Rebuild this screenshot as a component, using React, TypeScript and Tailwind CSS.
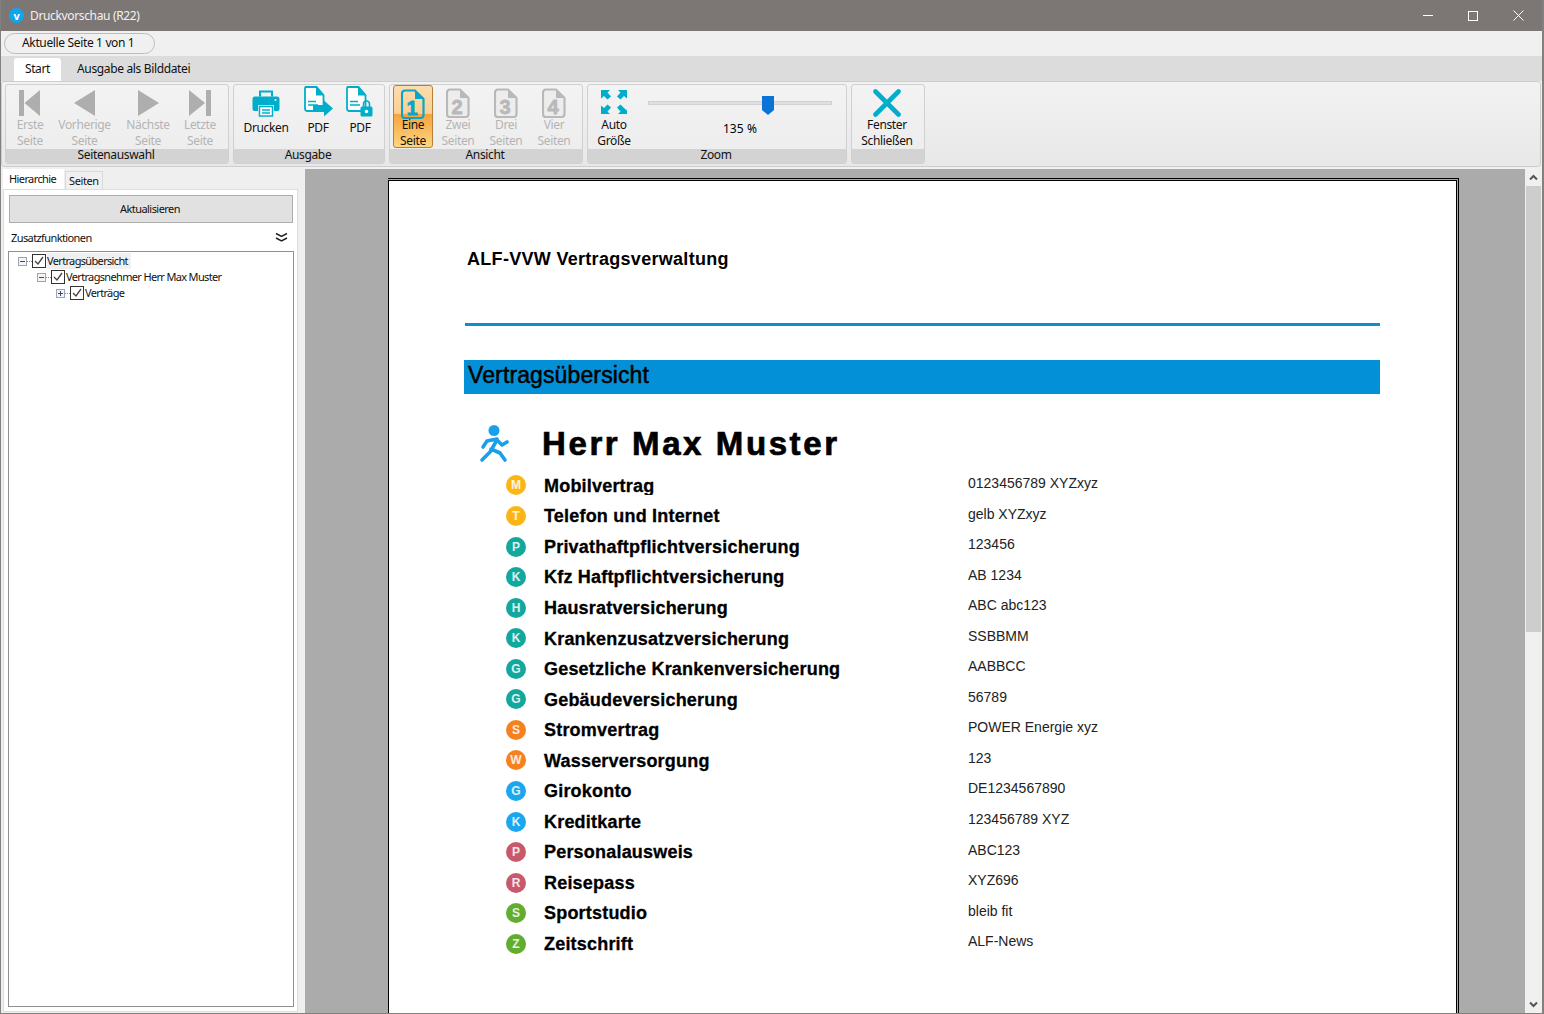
import React from "react";

const ui = "font-['Noto_Sans',sans-serif] text-[12px] leading-[16px] tracking-[-0.35px]";
const doc = "font-['Liberation_Sans',Arial,sans-serif] tracking-normal";

function Nav({ kind }: { kind: "first" | "prev" | "next" | "last" }) {
  return (
    <svg width="30" height="28" viewBox="0 0 30 28" className="block">
      {kind === "first" && <path d="M4 1h5v26H4zM9.500 14 25 1v26z" fill="#aeaeae" />}
      {kind === "prev" && <path d="M4 14 25 1v26z" fill="#aeaeae" />}
      {kind === "next" && <path d="M5 1l21 13L5 27z" fill="#aeaeae" />}
      {kind === "last" && <path d="M4 1l16 13L4 27zM21 1h5v26h-5z" fill="#aeaeae" />}
    </svg>
  );
}

function PageIcon({ n, active }: { n: string; active?: boolean }) {
  const c = active ? "#0aa5c9" : "#b9b9b9";
  return (
    <svg width="24" height="31" viewBox="0 0 24 31" className="block">
      <path d="M4 1.500h10l8.500 8.500v16a3 3 0 0 1-3 3h-15.500a3 3 0 0 1-3-3v-21.500a3 3 0 0 1 3-3z" fill={active ? "none" : "#ededed"} stroke={c} strokeWidth="2.200" />
      <path d="M14 1.500v8.500h8.500z" fill={c} />
      <text x="11" y="26" textAnchor="middle" fontSize="20" fontWeight="700" fontFamily="Liberation Sans" fill={c} stroke={c} strokeWidth="0.800">{n}</text>
    </svg>
  );
}

function Printer() {
  return (
    <svg width="28" height="28" viewBox="0 0 28 28" className="block">
      <path d="M7 1.500h14v6h-2v-4H9v4H7z" fill="#00aecb" />
      <path d="M3 7.500h22a2.500 2.500 0 0 1 2.500 2.500v10a2 2 0 0 1-2 2H22v-6H6v6H2.500a2 2 0 0 1-2-2V10A2.500 2.500 0 0 1 3 7.500z" fill="#00aecb" />
      <path d="M7.500 17.500h13V27h-13z" fill="#fff" stroke="#00aecb" strokeWidth="1.500" />
      <path d="M10 21h8M10 24h8" stroke="#00aecb" strokeWidth="1.300" />
      <circle cx="23.500" cy="11" r="1" fill="#fff" />
    </svg>
  );
}

function PdfDoc({ overlay }: { overlay: "arrow" | "lock" }) {
  return (
    <svg width="32" height="32" viewBox="0 0 32 32" className="block">
      <path d="M3.500 1h11l7 8v16h-16a2.500 2.500 0 0 1-2.500-2.500V3.500A2.500 2.500 0 0 1 3.500 1z" fill="#fff" stroke="#00aecb" strokeWidth="1.800" />
      <path d="M14 1v8.500h7.500z" fill="#00aecb" />
      <path d="M6 15.500h8M6 19h10" stroke="#00aecb" strokeWidth="1.400" />
      {overlay === "arrow" ? (
        <path d="M11 21h11v-4.500l9 8-9 8V27H11z" fill="#00aecb" transform="translate(0 -2)" />
      ) : (
        <g>
          <path d="M19.500 21v-3a3 3 0 0 1 6 0v3" fill="none" stroke="#00aecb" strokeWidth="1.600" />
          <rect x="16.500" y="20.500" width="12" height="10" rx="1.500" fill="#00aecb" />
          <circle cx="22.500" cy="25.500" r="1.700" fill="#fff" />
        </g>
      )}
    </svg>
  );
}

function AutoSize() {
  return (
    <svg width="28" height="26" viewBox="0 0 28 26" className="block">
      <g fill="#00aecb">
        <path d="M1 1h9L7.500 3.500 11 7.500 7.500 10.500 4 7 1 9.500z" />
        <path d="M27 1h-9l2.500 2.500L17 7.500l3.500 3L24 7l3 2.500z" />
        <path d="M1 25h9l-2.500-2.500L11 18.500l-3.500-3L4 19l-3-2.500z" />
        <path d="M27 25h-9l2.500-2.500L17 18.500l3.500-3L24 19l3 2.500z" />
      </g>
    </svg>
  );
}

function Btn({ w, l1, l2, dis, icon, single }: { w: string; l1: string; l2?: string; dis?: boolean; icon: React.ReactNode; single?: boolean }) {
  return (
    <div className={`${w} flex flex-col items-center shrink-0 ${dis ? "text-[#b4b4b4]" : "text-[#111]"}`}>
      <div className={`flex justify-center items-start shrink-0 ${single ? "h-[35px] pt-[1px]" : "h-[32px] pt-[4px]"}`}>{icon}</div>
      <span className="whitespace-nowrap">{l1}</span>
      {l2 && <span className="whitespace-nowrap">{l2}</span>}
    </div>
  );
}

function Group({ w, caption, children }: { w: string; caption: string; children: React.ReactNode }) {
  return (
    <div className={`${w} h-[80px] shrink-0 flex flex-col rounded-[3px] border border-[#d0d0d0] overflow-hidden bg-[linear-gradient(#f3f3f3,#ececec)]`}>
      <div className="h-[64px] flex">{children}</div>
      <div className="h-[14px] flex-1 bg-[#d3d3d3] text-center text-[#111] leading-[12px] pr-[2px]">{caption}</div>
    </div>
  );
}

function Check() {
  return (
    <span className="w-[14px] h-[14px] shrink-0 border border-[#333] bg-white flex items-center justify-center">
      <svg width="12" height="12" viewBox="0 0 12 12"><path d="M2 6l3 3 5-7" fill="none" stroke="#444" strokeWidth="1.300" /></svg>
    </span>
  );
}

function Expander({ open }: { open?: boolean }) {
  return (
    <span className="w-[9px] h-[9px] shrink-0 border border-[#9aa6b8] bg-[#f4f4f4] flex items-center justify-center relative">
      <span className="absolute w-[5px] h-[1px] bg-[#3a4a7a]" />
      {!open && <span className="absolute w-[1px] h-[5px] bg-[#3a4a7a]" />}
    </span>
  );
}

function TreeRow({ pl, open, text, sel }: { pl: string; open?: boolean; text: string; sel?: boolean }) {
  return (
    <div className={`${pl} h-[16px] flex items-center`}>
      <Expander open={open} />
      <span className="w-[5px] border-t border-dotted border-[#888]" />
      <Check />
      <span className={`ml-[1px] pr-[3px] text-[11px] leading-[16px] tracking-[-0.66px] whitespace-nowrap text-[#111] ${sel ? "bg-[#f0f0f0]" : ""}`}>{text}</span>
    </div>
  );
}

const rows: [string, string, string, string][] = [
  ["M", "#fdb515", "Mobilvertrag", "0123456789 XYZxyz"],
  ["T", "#fdb515", "Telefon und Internet", "gelb XYZxyz"],
  ["P", "#12a89d", "Privathaftpflichtversicherung", "123456"],
  ["K", "#12a89d", "Kfz Haftpflichtversicherung", "AB 1234"],
  ["H", "#12a89d", "Hausratversicherung", "ABC abc123"],
  ["K", "#12a89d", "Krankenzusatzversicherung", "SSBBMM"],
  ["G", "#12a89d", "Gesetzliche Krankenversicherung", "AABBCC"],
  ["G", "#12a89d", "Gebäudeversicherung", "56789"],
  ["S", "#f5821f", "Stromvertrag", "POWER Energie xyz"],
  ["W", "#f5821f", "Wasserversorgung", "123"],
  ["G", "#1aa7f0", "Girokonto", "DE1234567890"],
  ["K", "#1aa7f0", "Kreditkarte", "123456789 XYZ"],
  ["P", "#c8596a", "Personalausweis", "ABC123"],
  ["R", "#c8596a", "Reisepass", "XYZ696"],
  ["S", "#62ad2e", "Sportstudio", "bleib fit"],
  ["Z", "#62ad2e", "Zeitschrift", "ALF-News"],
];

export default function App() {
  return (
    <div className={`${ui} w-[1544px] h-[1014px] overflow-hidden flex flex-col bg-[#f0f0f0] border-l border-r-2 border-b border-[#858080]`}>
      {/* title bar */}
      <div className="h-[31px] shrink-0 bg-[#7c7675] flex items-center text-[#f2f2f2]">
        <span className="ml-[8px] w-[15px] h-[15px] rounded-full bg-[#12a5ef] text-white text-[11px] leading-[15px] font-bold text-center">v</span>
        <span className="ml-[6px]">Druckvorschau (R22)</span>
        <div className="ml-auto flex items-center gap-[35px] mr-[18px]">
          <span className="w-[10px] h-[1px] bg-white" />
          <span className="w-[10px] h-[10px] border border-white" />
          <svg width="11" height="11" viewBox="0 0 11 11"><path d="M.5.500l10 10M10.500.500l-10 10" stroke="#fff" strokeWidth="1" /></svg>
        </div>
      </div>
      {/* page indicator */}
      <div className="h-[25px] shrink-0 bg-[#f0f0f0] pl-[3px] pt-[2px]">
        <div className="w-[151px] h-[21px] rounded-full border border-[#bcbcbc] pl-[17px] leading-[18px] text-[#111]">Aktuelle Seite 1 von 1</div>
      </div>
      {/* ribbon tabs */}
      <div className="h-[25px] shrink-0 bg-[#dcdcdc] flex items-end pl-[13px] text-[#111]">
        <div className="w-[47px] h-[23px] bg-white rounded-t-[3px] text-center leading-[22px]">Start</div>
        <div className="ml-[16px] h-[23px] leading-[22px]">Ausgabe als Bilddatei</div>
      </div>
      {/* ribbon */}
      <div className="h-[86px] shrink-0 mr-[1px] rounded-[3px] border border-[#cdcdcd] bg-[linear-gradient(#f2f2f2,#e8e8e8)] flex gap-[4px] pl-[3px] pt-[2px]">
        <Group w="w-[224px]" caption="Seitenauswahl">
          <Btn w="w-[48px]" dis l1="Erste" l2="Seite" icon={<Nav kind="first" />} />
          <Btn w="w-[61px]" dis l1="Vorherige" l2="Seite" icon={<Nav kind="prev" />} />
          <Btn w="w-[66px]" dis l1="Nächste" l2="Seite" icon={<Nav kind="next" />} />
          <Btn w="w-[38px]" dis l1="Letzte" l2="Seite" icon={<Nav kind="last" />} />
        </Group>
        <Group w="w-[152px]" caption="Ausgabe">
          <Btn w="w-[64px]" single l1="Drucken" icon={<div className="pt-[3px]"><Printer /></div>} />
          <Btn w="w-[40px]" single l1="PDF" icon={<PdfDoc overlay="arrow" />} />
          <Btn w="w-[44px]" single l1="PDF" icon={<PdfDoc overlay="lock" />} />
        </Group>
        <Group w="w-[194px]" caption="Ansicht">
          <div className="w-[40px] h-[63px] ml-[3px] shrink-0 rounded-[3px] border border-[#b4803c] bg-[linear-gradient(#fddcae_0%,#fbcf94_45%,#f7a33c_46%,#fdd680_100%)] flex flex-col items-center text-[#111]">
            <div className="h-[31px] shrink-0 pt-[3px]"><PageIcon n="1" active /></div>
            <span>Eine</span>
            <span>Seite</span>
          </div>
          <Btn w="w-[50px]" dis l1="Zwei" l2="Seiten" icon={<div className="-mt-[1px]"><PageIcon n="2" /></div>} />
          <Btn w="w-[46px]" dis l1="Drei" l2="Seiten" icon={<div className="-mt-[1px]"><PageIcon n="3" /></div>} />
          <Btn w="w-[50px]" dis l1="Vier" l2="Seiten" icon={<div className="-mt-[1px]"><PageIcon n="4" /></div>} />
        </Group>
        <Group w="w-[260px]" caption="Zoom">
          <Btn w="w-[52px]" l1="Auto" l2="Größe" icon={<AutoSize />} />
          <div className="ml-[8px] w-[184px] flex flex-col items-center">
            <div className="relative w-full h-[4px] mt-[16px] bg-[#e0e0e0] border border-[#d2d2d2]">
              <svg width="12" height="19" viewBox="0 0 12 19" className="absolute left-[113px] -top-[6px]"><path d="M0 0h12v14l-6 5-6-5z" fill="#0a74d6" /></svg>
            </div>
            <span className="mt-[16px] tracking-[0.1px]">135 %</span>
          </div>
        </Group>
        <Group w="w-[74px]" caption="">
          <Btn
            w="w-[70px]"
            l1="Fenster"
            l2="Schließen"
            icon={
              <svg width="28" height="28" viewBox="0 0 28 28" className="block">
                <path d="M2.500 2.500l23 23M25.500 2.500l-23 23" stroke="#00aecb" strokeWidth="4.600" strokeLinecap="round" />
              </svg>
            }
          />
        </Group>
      </div>
      <div className="h-[2px] shrink-0" />
      {/* body */}
      <div className="flex-1 min-h-0 flex">
        {/* sidebar */}
        <div className="w-[304px] shrink-0 bg-[#efefef] pl-[2px] flex flex-col">
          <div className="h-[20px] shrink-0 flex items-end relative z-10">
            <div className="w-[61px] h-[20px] bg-white pl-[6px] text-[11px] leading-[19px] tracking-[-0.6px] text-[#111]">Hierarchie</div>
            <div className="ml-[1px] w-[38px] h-[18px] border border-[#dadada] border-b-0 bg-[#f0f0f0] pl-[3px] text-[11px] leading-[18px] tracking-[-0.4px] text-[#111]">Seiten</div>
          </div>
          <div className="w-[295px] flex-1 min-h-0 mb-[1px] bg-white border border-[#dedede] px-[5px] pt-[5px] pb-[4px] flex flex-col">
            <div className="w-[284px] h-[28px] shrink-0 bg-[#e1e1e1] border border-[#adadad] text-center text-[11px] leading-[26px] tracking-[-0.55px] text-[#111] pr-[2px]">Aktualisieren</div>
            <div className="h-[28px] shrink-0 flex items-center justify-between pl-[2px] pr-[4px] text-[11px] tracking-[-0.6px] text-[#111] pt-[1px]">
              <span>Zusatzfunktionen</span>
              <svg width="13" height="11" viewBox="0 0 13 11"><path d="M1 1.500l5.500 3 5.500-3M1 6l5.500 3L12 6" fill="none" stroke="#222" strokeWidth="1.500" /></svg>
            </div>
            <div className="w-[286px] -ml-[1px] flex-1 min-h-0 border border-[#8f8f8f] pt-[1px]">
              <TreeRow pl="pl-[9px]" open sel text="Vertragsübersicht" />
              <TreeRow pl="pl-[28px]" open text="Vertragsnehmer Herr Max Muster" />
              <TreeRow pl="pl-[47px]" text="Verträge" />
            </div>
          </div>
        </div>
        {/* document area */}
        <div className="flex-1 min-w-0 bg-[#ababab] pl-[83px] pt-[9px] overflow-hidden">
          <div className="w-[1071px] h-[1000px] border-t border-r border-black pr-[1px] pt-[1px]">
            <div className={`${doc} h-full bg-white border-l border-t border-r border-black pl-[75px] pr-[76px] text-black`}>
              <div className="h-[145px] shrink-0 flex flex-col border-b-[3px] border-[#0b8fd1] ml-[1px]">
                <div className="mt-[67px] ml-[2px] text-[18px] leading-[22px] font-bold tracking-[0.3px] whitespace-nowrap">ALF-VVW Vertragsverwaltung</div>
              </div>
              <div className="mt-[34px] h-[34px] bg-[#0490d6] pl-[4px] text-[23px] leading-[31px] tracking-[0.12px] [-webkit-text-stroke:0.5px_#000] whitespace-nowrap">Vertragsübersicht</div>
              <div className="mt-[27px] h-[46px] flex items-center pl-[15px]">
                <svg width="32" height="40" viewBox="0 0 32 40" className="block shrink-0">
                  <circle cx="15" cy="6.500" r="5.500" fill="#18a0ea" />
                  <path d="M4 23l4-6 10-2M18 16l5 5 5-3M18 16l-7 12-8 8M12 25l9 4 5 7" fill="none" stroke="#18a0ea" strokeWidth="3.600" strokeLinecap="round" strokeLinejoin="round" />
                </svg>
                <span className="ml-[31px] text-[33px] leading-[40px] font-bold tracking-[2.6px] [-webkit-text-stroke:0.7px_#000] whitespace-nowrap">Herr Max Muster</span>
              </div>
              <div className="pl-[42px] mt-[4.800px]">
                {rows.map(([b, c, label, val], i) => (
                  <div key={i} className="h-[30.550px] flex items-start">
                    <span className="w-[20px] h-[20px] mt-[3.700px] rounded-full shrink-0 text-center text-[12px] leading-[20px] font-bold text-white/85" style={{ backgroundColor: c }}>{b}</span>
                    <span className={`ml-[18px] w-[424px] shrink-0 mt-[3px] text-[18px] leading-[22px] font-bold tracking-[0.2px] [-webkit-text-stroke:0.3px_#000] whitespace-nowrap ${i === 0 ? "h-[20px] overflow-hidden" : ""}`}>{label}</span>
                    <span className="mt-[1.200px] text-[14px] leading-[20px] text-[#222] whitespace-nowrap">{val}</span>
                  </div>
                ))}
              </div>
            </div>
          </div>
        </div>
        {/* scrollbar */}
        <div className="w-[17px] shrink-0 bg-[#f0f0f0] flex flex-col items-center">
          <div className="h-[17px] shrink-0 flex items-center justify-center">
            <svg width="9" height="7" viewBox="0 0 9 7"><path d="M1 5.500l3.500-3.500 3.500 3.500" fill="none" stroke="#555" strokeWidth="2" /></svg>
          </div>
          <div className="w-[15px] h-[446px] shrink-0 bg-[#cdcdcd]" />
          <div className="flex-1" />
          <div className="h-[17px] shrink-0 flex items-center justify-center">
            <svg width="9" height="7" viewBox="0 0 9 7"><path d="M1 1.500l3.500 3.500 3.500-3.500" fill="none" stroke="#555" strokeWidth="2" /></svg>
          </div>
        </div>
      </div>
    </div>
  );
}
